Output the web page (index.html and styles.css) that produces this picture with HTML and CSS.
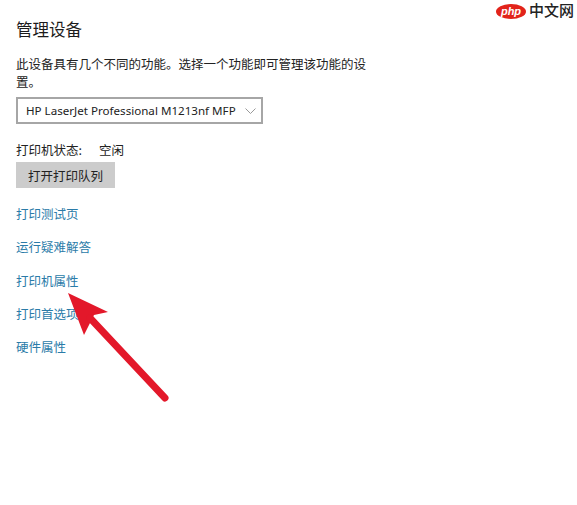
FILE: index.html
```html
<!DOCTYPE html>
<html lang="zh-CN">
<head>
<meta charset="utf-8">
<title>管理设备</title>
<link rel="stylesheet" href="styles.css">
</head>
<body>
<main class="page">
  <h1 class="title">管理设备</h1>
  <p class="desc">此设备具有几个不同的功能。选择一个功能即可管理该功能的设置。</p>
  <div class="select">
    <span>HP LaserJet Professional M1213nf MFP</span>
    <svg class="chev" width="11" height="6" viewBox="0 0 11 6"><path d="M.5.5 5.500 5.500l5-5" fill="none" stroke="#999"/></svg>
  </div>
  <div class="status"><span>打印机状态:</span><span>空闲</span></div>
  <button class="btn">打开打印队列</button>
  <nav class="links">
    <a>打印测试页</a>
    <a>运行疑难解答</a>
    <a>打印机属性</a>
    <a>打印首选项</a>
    <a>硬件属性</a>
  </nav>
</main>
<div class="logo">
  <span class="php">php</span><span class="cn">中文网</span>
</div>
<svg class="arrow" width="577" height="505" viewBox="0 0 577 505">
  <path d="M68 293 108 312 94 315 84 335Z" fill="#e3182a"/>
  <path d="M90 318 165 398" stroke="#e3182a" stroke-width="7" stroke-linecap="round" fill="none"/>
</svg>
</body>
</html>
```
FILE: styles.css
```css
html, body { margin: 0; padding: 0; background: #fff; }
body {
  width: 577px;
  height: 505px;
  overflow: hidden;
  position: relative;
  font-family: "Noto Sans CJK SC", "Noto Sans", sans-serif;
  color: #222;
  font-size: 12.5px;
}
.page { padding: 17px 0 0 16px; display: flex; flex-direction: column; align-items: flex-start; }
.title { margin: 0 0 14px; font-size: 16.500px; font-weight: 400; line-height: 24px; color: #1c1c1c; }
.desc { margin: 0 0 6px; width: 352px; line-height: 18px; }
.select {
  box-sizing: border-box;
  width: 247px;
  height: 27px;
  border: 2px solid #a6a6a6;
  display: flex;
  align-items: center;
  justify-content: space-between;
  padding: 0 5px 0 8px;
  font-family: "Noto Sans", sans-serif;
  font-size: 11.600px;
  white-space: nowrap;
}
.chev { flex: none; }
.status { display: flex; gap: 17px; margin-top: 17px; line-height: 18px; }
.btn {
  margin-top: 3px;
  width: 99px;
  height: 26px;
  border: 0;
  padding: 0;
  background: #cccccc;
  font: inherit;
  color: #222;
}
.links { display: flex; flex-direction: column; gap: 15.300px; margin-top: 17px; color: #2a7ba8; }
.links a { line-height: 18px; }
.logo { position: absolute; left: 496px; top: 1px; display: flex; align-items: flex-start; gap: 3px; white-space: nowrap; }
.php {
  width: 30px;
  height: 15px;
  margin-top: 3px;
  border-radius: 50%;
  background: #e2231a;
  color: #fff;
  font: italic 700 11px/14px "Liberation Sans", sans-serif;
  text-align: center;
}
.cn { font-size: 15px; line-height: 18px; color: #222; font-weight: 500; }
.arrow { position: absolute; left: 0; top: 0; pointer-events: none; }
```
